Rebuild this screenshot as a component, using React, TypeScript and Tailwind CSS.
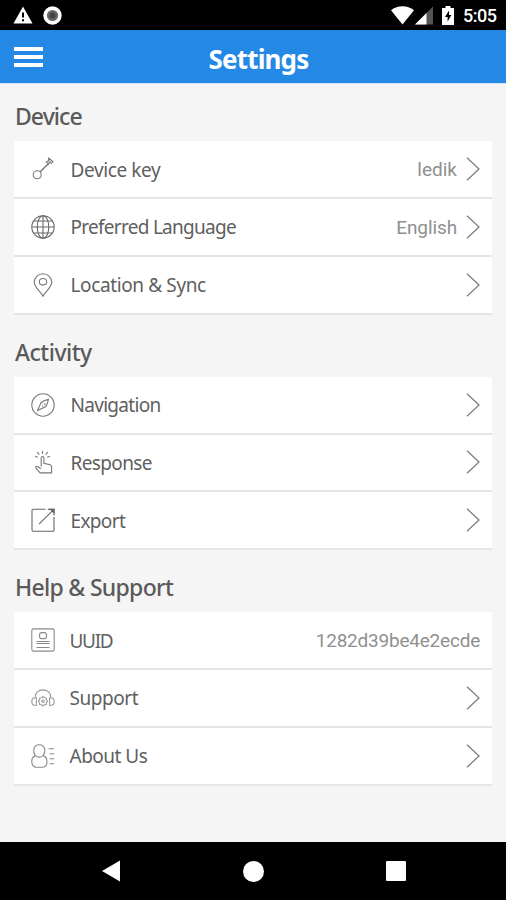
import React from "react";
import cn from "clsx";

type Item = {
  label: string;
  icon: React.ReactNode;
  labelClass: string;
  value?: string;
  valueClass?: string;
  arrow?: boolean;
};

const Icon = ({
  children,
  className,
}: {
  children: React.ReactNode;
  className?: string;
}) => (
  <svg
    width="24"
    height="24"
    viewBox="0 0 24 24"
    fill="none"
    stroke="currentColor"
    strokeWidth="1.1"
    className={cn("shrink-0", className)}
  >
    {children}
  </svg>
);

const KeyIcon = () => (
  <Icon className="text-[#777]">
    <circle cx="6.2" cy="17.8" r="4" />
    <path d="M9 15 19.800 4.200" strokeWidth="1.4" />
    <path d="M17.200.8 22 4.600l-2.200 2.200M17.200.8l.8 2.600-2.800 1.800 2.600 2.400" />
  </Icon>
);

const GlobeIcon = () => (
  <Icon className="text-[#666]">
    <circle cx="12" cy="12" r="11.2" />
    <ellipse cx="12" cy="12" rx="5.8" ry="11.2" />
    <path d="M12 .8v22.4M.8 12h22.4M2.8 6h18.4M2.8 18h18.4" />
  </Icon>
);

const PinIcon = () => (
  <Icon className="text-[#777]">
    <path d="M12 23.2C10 19 3.2 14.2 3.2 9.3a8.8 8.5 0 0 1 17.6 0C20.8 14.2 14 19 12 23.2Z" />
    <ellipse cx="12" cy="8.8" rx="3.7" ry="3.3" />
  </Icon>
);

const CompassIcon = () => (
  <Icon className="text-[#777]">
    <circle cx="12" cy="12" r="11.2" />
    <path d="M17.4 6.4C16.8 9.500 15.800 12.600 14.200 14L6.600 17.400 9.800 10C11.400 8.400 14.300 7 17.400 6.400ZM13 10.400l1.400 1.400M11 12.600l1 1" />
  </Icon>
);

const TouchIcon = () => (
  <Icon className="text-[#777]">
    <path d="M10.200 16.500V7.700c0-1.700 2.700-1.700 2.700 0v5.500l6.300 1.600c1 .3 1.400.9 1.400 1.900v6.200H9.200l-4-4.200c-1.400-1.500.2-3 1.700-2l3.300 2.200" />
    <path d="M11.500.7v3.200M6.200 2l2 2.700M16.800 2l-2 2.700M4 6.200l2.800 1M19 6.200l-2.800 1" />
  </Icon>
);

const ExportIcon = () => (
  <Icon className="text-[#666]">
    <path d="M14.500 1.200H2.200A1.200 1.200 0 0 0 1 2.400V22a1.200 1.200 0 0 0 1.200 1.200h19.600A1.200 1.200 0 0 0 23 22V9M8 16.200 22.400 1.800M16.800 1.400H23v6.200" />
    <path d="M19.500 1.200H23v3.600Z" fill="currentColor" />
  </Icon>
);

const IdIcon = () => (
  <Icon className="text-[#8a8a8a]">
    <rect x=".8" y=".9" width="22.4" height="22.2" rx="1.6" />
    <rect x="8.500" y="4.600" width="7" height="6" rx="2.400" />
    <path d="M5.500 13.500h13M5.500 15.500h13M5.500 19.500h13" />
  </Icon>
);

const HeadsetIcon = () => (
  <Icon className="text-[#999]">
    <path d="M4.200 11.200C4.200 1.400 19.800 1.400 19.800 11.200M5.400 11.200v8H3.300C0 19.200 0 12 3.300 12h2M18.600 11.200v8h2.100c3.300 0 3.300-7.200 0-7.200h-2" />
    <path d="m12 10.500 1.300 1.300 2 .2.100 1.900 1.100 1.400-1.100 1.400-.2 2-1.900.1-1.300 1.100-1.400-1.100-1.900-.2-.2-1.900-1.100-1.400 1.100-1.400.2-1.900 1.900-.2Z" />
    <circle cx="12" cy="15.200" r="1.200" />
  </Icon>
);

const PersonIcon = () => (
  <Icon className="text-[#8a8a8a]">
    <path d="M2.800 5.800C3.600-.9 13-.9 13.800 5.800c.4 4.200-1.800 7.300-5.500 7.300S2.400 10 2.800 5.800Z" />
    <path d="M4.600 11.600C1.700 12.400.8 14.500.8 17.300c0 4.200 1.200 5.900 4.600 5.900h6.400c3.200 0 4.200-1.700 4.200-5.100 0-3.700-1-5.700-3.900-6.500M17.500 4.700h5.700M18.500 9.700h4.700M18.500 14.700h4.700M18.500 19.700h4.700" />
  </Icon>
);

const sections: { title: string; titleClass: string; items: Item[] }[] = [
  {
    title: "Device",
    titleClass: "tracking-[-0.95px]",
    items: [
      {
        label: "Device key",
        icon: <KeyIcon />,
        labelClass: "pl-px tracking-[-0.4px]",
        value: "ledik",
        arrow: true,
      },
      {
        label: "Preferred Language",
        icon: <GlobeIcon />,
        labelClass: "pl-px tracking-[-0.72px]",
        value: "English",
        valueClass: "tracking-[-0.1px]",
        arrow: true,
      },
      {
        label: "Location & Sync",
        icon: <PinIcon />,
        labelClass: "pl-px tracking-[-0.38px]",
        arrow: true,
      },
    ],
  },
  {
    title: "Activity",
    titleClass: "tracking-[-0.5px]",
    items: [
      {
        label: "Navigation",
        icon: <CompassIcon />,
        labelClass: "pl-px tracking-[-0.7px]",
        arrow: true,
      },
      {
        label: "Response",
        icon: <TouchIcon />,
        labelClass: "pl-px tracking-[-0.62px]",
        arrow: true,
      },
      {
        label: "Export",
        icon: <ExportIcon />,
        labelClass: "pl-px tracking-[-0.65px]",
        arrow: true,
      },
    ],
  },
  {
    title: "Help & Support",
    titleClass: "tracking-[-0.7px]",
    items: [
      {
        label: "UUID",
        icon: <IdIcon />,
        labelClass: "tracking-[-1.3px]",
        value: "1282d39be4e2ecde",
        valueClass: "tracking-[-0.22px]",
      },
      {
        label: "Support",
        icon: <HeadsetIcon />,
        labelClass: "tracking-[-0.45px]",
        arrow: true,
      },
      {
        label: "About Us",
        icon: <PersonIcon />,
        labelClass: "tracking-[-0.5px]",
        arrow: true,
      },
    ],
  },
];

const StatusBar = () => (
  <div className="flex h-[30px] shrink-0 items-center justify-between bg-black pl-[13px] pr-[9px] text-white">
    <div className="flex items-center gap-[10px]">
      <svg width="20" height="18" viewBox="0 0 20 18">
        <path d="M10 .5 19.5 17.5H.5Z" fill="#fff" />
        <path d="M9 6.5h2v5H9zM9 13.2h2v2H9z" fill="#000" />
      </svg>
      <svg width="19" height="19" viewBox="0 0 19 19">
        <circle cx="9.5" cy="9.5" r="9.2" fill="#fff" />
        <circle cx="9.5" cy="9.5" r="5.6" fill="#666" />
        <circle cx="9.5" cy="9.5" r="3" fill="#444" />
      </svg>
    </div>
    <div className="flex items-center">
      <svg width="23" height="19" viewBox="0 0 23 19">
        <path d="M0 4.2C6.5-1 16.5-1 23 4.2L11.500 18.5Z" fill="#fff" />
      </svg>
      <svg width="18" height="19" viewBox="0 0 18 19" className="ml-px">
        <path d="M18 .5v18H0Z" fill="#555" />
        <path d="M11.5 7v11.5H0Z" fill="#fff" />
      </svg>
      <svg width="12" height="19" viewBox="0 0 12 19" className="ml-[9px]">
        <path d="M3.5 0h5v2H12v17H0V2h3.5Z" fill="#fff" />
        <path d="M7 4.5 3 11h2.6v4.5L9.4 9H7Z" fill="#000" />
      </svg>
      <span className="ml-[9px] w-[34px] pt-0.5 font-[Roboto] text-[18px] font-medium leading-none tracking-[-0.5px]">
        5:05
      </span>
    </div>
  </div>
);

const Row = ({ item }: { item: Item }) => (
  <li className="flex h-[57.75px] items-center border-b-2 border-[#e5e5e5] bg-white pl-[17px] pr-3">
    {item.icon}
    <span
      className={cn(
        "ml-[14.5px] flex-1 whitespace-nowrap pt-px text-[19px] leading-6 text-[#606060]",
        item.labelClass
      )}
    >
      {item.label}
    </span>
    {item.value && (
      <span
        className={cn(
          "pt-0.5 font-[Roboto] text-[19px] leading-6 text-[#8f8f8f]",
          item.valueClass
        )}
      >
        {item.value}
      </span>
    )}
    {item.arrow && (
      <svg
        width="14"
        height="24"
        viewBox="0 0 14 24"
        fill="none"
        stroke="#808080"
        strokeWidth="1.3"
        className="ml-[9px] shrink-0"
      >
        <path d="M1 .8 13 12 1 23.2" />
      </svg>
    )}
  </li>
);

const App = () => {
  return (
    <div className="flex h-[900px] w-[506px] flex-col overflow-hidden bg-[#f5f5f5] font-['Noto_Sans',sans-serif]">
      <StatusBar />
      <header className="flex h-[54px] shrink-0 items-center border-b border-[#cfe5f9] bg-[#2489e4] pl-[14px]">
        <button aria-label="Menu" className="flex w-[29px] flex-col gap-1">
          <span className="h-1 bg-white" />
          <span className="h-1 bg-white" />
          <span className="h-1 bg-white" />
        </button>
        <h1 className="flex-1 pr-[32px] pt-1 text-center text-[26px] font-bold leading-8 tracking-[-0.85px] text-white">
          Settings
        </h1>
      </header>
      <main className="flex-1 px-[14px]">
        {sections.map((section) => (
          <section key={section.title} className="mb-[5px]">
            <h2
              className={cn(
                "h-[57.25px] pl-px pt-[17px] text-[23px] font-medium leading-[30px] text-[#5a5a5a]",
                section.titleClass
              )}
            >
              {section.title}
            </h2>
            <ul>
              {section.items.map((item) => (
                <Row key={item.label} item={item} />
              ))}
            </ul>
          </section>
        ))}
      </main>
      <nav className="flex h-[58px] shrink-0 items-center justify-between bg-black pl-[101px] pr-[100px]">
        <svg width="20" height="22" viewBox="0 0 20 22">
          <path d="M19 .5v21L1 11Z" fill="#fff" />
        </svg>
        <span className="size-[21px] rounded-full bg-white" />
        <span className="size-5 rounded-[1px] bg-white" />
      </nav>
    </div>
  );
};

export default App;
